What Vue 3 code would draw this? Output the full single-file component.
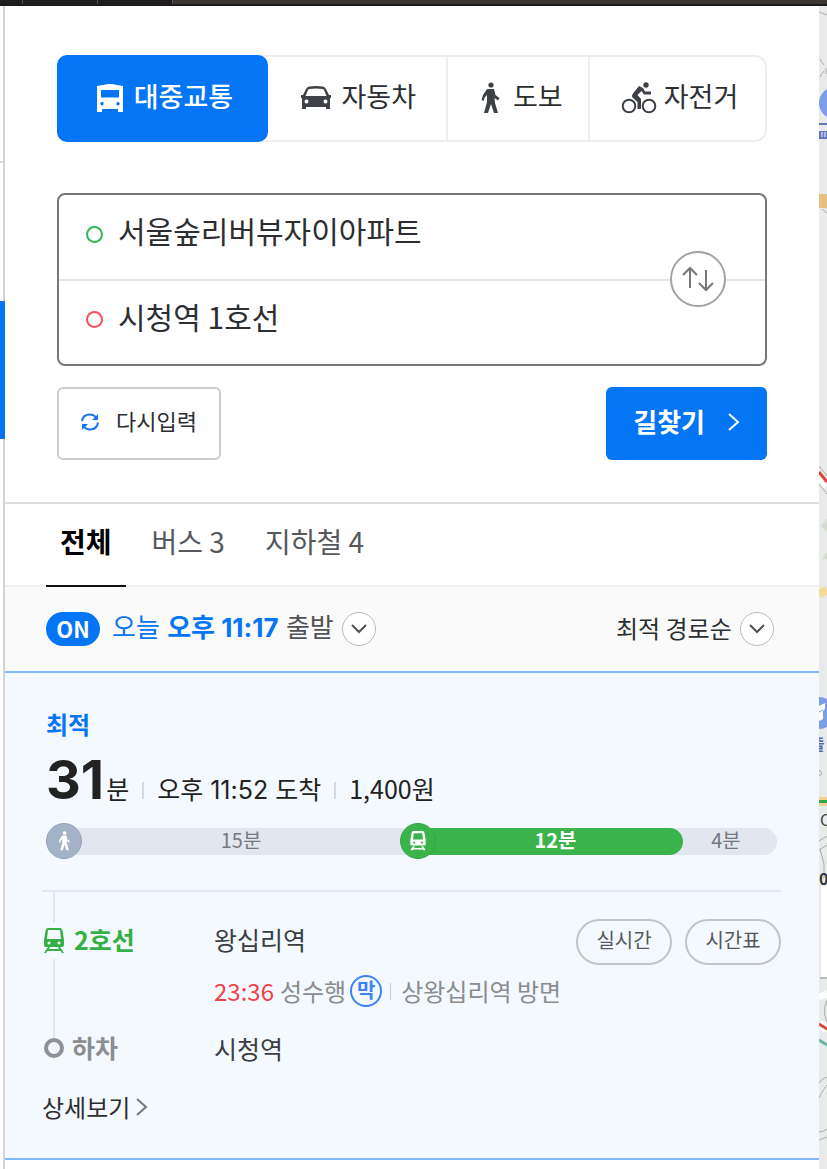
<script setup>
import { ref } from 'vue'

const modes = [
  { id: 'transit', label: '대중교통', grow: 214 },
  { id: 'car', label: '자동차', grow: 180 },
  { id: 'walk', label: '도보', grow: 141 },
  { id: 'bike', label: '자전거', grow: 177 },
]
const mode = ref('transit')

const start = ref('서울숲리버뷰자이아파트')
const goal = ref('시청역 1호선')

function swap() {
  const previous = start.value
  start.value = goal.value
  goal.value = previous
}
function reset() {
  start.value = ''
  goal.value = ''
}

const filters = ['전체', '버스 3', '지하철 4']
const filter = ref('전체')

const segments = [
  { kind: 'walk', icon: true, label: '15분', grow: 354 },
  { kind: 'subway', icon: true, label: '12분', grow: 283 },
  { kind: 'walk', icon: false, label: '4분', grow: 94 },
]
</script>

<template>
  <div class="page">
    <div class="browser-bar"><i></i><i></i><i></i></div>
    <div class="workspace">
      <div class="rail">
        <div class="rail-head"></div>
        <div class="rail-active"></div>
      </div>

      <main class="panel">
        <section class="search">
          <div class="modes" role="tablist">
            <button
              v-for="m in modes"
              :key="m.id"
              type="button"
              role="tab"
              class="mode"
              :class="{ active: m.id === mode }"
              :aria-selected="m.id === mode"
              :style="{ flexGrow: m.grow }"
              @click="mode = m.id"
            >
              <svg v-if="m.id === 'transit'" width="28" height="30" viewBox="0 0 28 30" aria-hidden="true">
                <path fill="currentColor" fill-rule="evenodd" d="M7 2Q14 0 21 2L27 3V29H22V26H6V29H1V3ZM5 7V14.500H23V7ZM6 19a1.700 1.700 0 1 0 .01 0ZM22 19a1.700 1.700 0 1 0 .01 0Z" />
              </svg>
              <svg v-else-if="m.id === 'car'" width="30" height="26" viewBox="0 0 30 26" aria-hidden="true">
                <path fill="currentColor" fill-rule="evenodd" d="M8 1.500Q15 .500 22 1.500Q24 2 25 4L28 10H30V13H29V24H25V22H5V24H1V13H0V10H2L5 4Q6 2 8 1.500ZM8.500 4Q7.500 4.200 7 5L4.500 11H25.500L23 5Q22.500 4.200 21.500 4Q15 3.200 8.500 4ZM5.500 14.500a2 2 0 1 0 .01 0ZM24.500 14.500a2 2 0 1 0 .01 0Z" />
              </svg>
              <svg v-else-if="m.id === 'walk'" width="26" height="32" viewBox="0 0 26 32" aria-hidden="true">
                <circle cx="14" cy="3" r="2.600" fill="currentColor" />
                <path fill="currentColor" d="M10 7H17L18.500 13L22.500 16L21 18.500L17.500 16L18 21L21 31H17L14 22L11 31H7L10 20V13L8 15L6.500 19L4.500 18L6 13Z" />
              </svg>
              <svg v-else width="36" height="32" viewBox="0 0 36 32" aria-hidden="true">
                <g fill="none" stroke="currentColor" stroke-width="2">
                  <circle cx="8" cy="24" r="6.300" />
                  <circle cx="28" cy="24" r="6.300" />
                </g>
                <circle cx="25" cy="3" r="2.700" fill="currentColor" />
                <path fill="currentColor" d="M18 4L22 6L24 9.500H30V12.500H23L20.500 9L16.500 13L20 17V27H16.500V20L12 16Q10 14 12 11.500Z" />
              </svg>
              <span>{{ m.label }}</span>
            </button>
          </div>

          <div class="fields">
            <label class="field">
              <span class="dot start"></span>
              <input v-model="start" type="text" aria-label="출발지" />
            </label>
            <label class="field">
              <span class="dot goal"></span>
              <input v-model="goal" type="text" aria-label="도착지" />
            </label>
            <button type="button" class="swap" aria-label="출발지와 도착지 바꾸기" @click="swap">
              <svg width="34" height="26" viewBox="0 0 34 26" aria-hidden="true">
                <path fill="none" stroke="currentColor" stroke-width="2" d="M9 22V2M2 9L9 2L16 9M25 4V24M18 17L25 24L32 17" />
              </svg>
            </button>
          </div>

          <div class="actions">
            <button type="button" class="reset" @click="reset">
              <svg width="18" height="18" viewBox="0 0 18 18" aria-hidden="true">
                <path fill="none" stroke="currentColor" stroke-width="2" d="M1 8Q2 1.500 9 1.500Q13 1.500 15.500 5M17 9.500Q16 16.500 9 16.500Q5 16.500 2.500 13" />
                <path fill="currentColor" d="M17 1V7H11ZM1 17V11H7Z" />
              </svg>
              <span>다시입력</span>
            </button>
            <button type="button" class="go">
              <span>길찾기</span>
              <svg width="12" height="20" viewBox="0 0 12 20" aria-hidden="true">
                <path fill="none" stroke="currentColor" stroke-width="2" d="M1 2L10 10L1 18" />
              </svg>
            </button>
          </div>
        </section>

        <nav class="filters">
          <button
            v-for="f in filters"
            :key="f"
            type="button"
            class="filter"
            :class="{ active: f === filter }"
            @click="filter = f"
          >{{ f }}</button>
        </nav>

        <div class="options">
          <button type="button" class="depart">
            <span class="on">ON</span>
            <span class="when">오늘 <b>오후 11:17</b> <em>출발</em></span>
            <span class="round">
              <svg width="18" height="12" viewBox="0 0 18 12" aria-hidden="true">
                <path fill="none" stroke="currentColor" stroke-width="2" d="M2 2L9 9L16 2" />
              </svg>
            </span>
          </button>
          <label class="sort">
            <select aria-label="정렬">
              <option>최적 경로순</option>
            </select>
            <span class="round">
              <svg width="18" height="12" viewBox="0 0 18 12" aria-hidden="true">
                <path fill="none" stroke="currentColor" stroke-width="2" d="M2 2L9 9L16 2" />
              </svg>
            </span>
          </label>
        </div>

        <article class="route">
          <div class="overview">
            <strong class="best">최적</strong>
            <div class="summary">
              <span class="minutes">31</span><span class="unit">분</span>
              <i class="bar-sep"></i>
              <span class="arrival">오후 11:52 도착</span>
              <i class="bar-sep"></i>
              <span>1,400원</span>
            </div>
            <div class="timeline">
              <div
                v-for="(s, i) in segments"
                :key="i"
                class="segment"
                :class="s.kind"
                :style="{ flexGrow: s.grow }"
              >
                <span v-if="s.icon" class="badge">
                  <svg v-if="s.kind === 'walk'" width="16" height="20" viewBox="0 0 26 32" aria-hidden="true">
                    <circle cx="14" cy="3" r="3" fill="currentColor" />
                    <path fill="currentColor" d="M10 7H17L18.500 13L22.500 16L21 18.500L17.500 16L18 21L21 31H17L14 22L11 31H7L10 20V13L8 15L6.500 19L4.500 18L6 13Z" />
                  </svg>
                  <svg v-else width="16" height="20" viewBox="0 0 20 26" aria-hidden="true">
                    <path fill="currentColor" fill-rule="evenodd" d="M4 0H16Q18 0 18.500 3L20 12V17Q20 19 18 19H2Q0 19 0 17V12L1.500 3Q2 0 4 0ZM4.500 3L3.500 11H16.500L15.500 3ZM5 13.500a1.500 1.500 0 1 0 .01 0ZM15 13.500a1.500 1.500 0 1 0 .01 0ZM3 20H6L5 22H15L14 20H17L20 25H17L16 24H4L3 25H0Z" />
                  </svg>
                </span>
                <span class="track">{{ s.label }}</span>
              </div>
            </div>
          </div>

          <div class="legs">
            <div class="leg board">
              <div class="leg-name subway-name">
                <span class="marker">
                  <svg width="20" height="26" viewBox="0 0 20 26" aria-hidden="true">
                    <path fill="currentColor" fill-rule="evenodd" d="M4 0H16Q18 0 18.500 3L20 12V17Q20 19 18 19H2Q0 19 0 17V12L1.500 3Q2 0 4 0ZM4 2L3 11H17L16 2ZM5 13.500a1.500 1.500 0 1 0 .01 0ZM15 13.500a1.500 1.500 0 1 0 .01 0ZM4 19H6L5 21H15L14 19H16L20 25H18L16.500 23H3.500L2 25H0Z" />
                  </svg>
                </span>
                <b>2호선</b>
              </div>
              <span class="station">왕십리역</span>
              <div class="pills">
                <button type="button">실시간</button>
                <button type="button">시간표</button>
              </div>
            </div>
            <div class="train">
              <span class="time">23:36</span>
              <span>성수행</span>
              <span class="last">막</span>
              <i class="thin-sep"></i>
              <span>상왕십리역 방면</span>
            </div>
            <div class="leg alight">
              <div class="leg-name alight-name">
                <span class="marker"><i class="ring"></i></span>
                <b>하차</b>
              </div>
              <span class="station">시청역</span>
            </div>
          </div>

          <a class="detail" href="#">
            <span>상세보기</span>
            <svg width="12" height="20" viewBox="0 0 12 20" aria-hidden="true">
              <path fill="none" stroke="currentColor" stroke-width="2" d="M1 2L10 10L1 18" />
            </svg>
          </a>
        </article>
      </main>

      <aside class="map" aria-label="지도">
        <svg width="8" height="1163" viewBox="0 0 8 1163" aria-hidden="true">
          <rect width="8" height="1163" fill="#e9ebeb" />
          <path d="M0 6L8 9" stroke="#aaa" fill="none" />
          <path d="M1 53L5 59M1 71L5 65M7 62V68" stroke="#aaa" fill="none" />
          <circle cx="16" cy="97" r="16" fill="#7d9ee6" />
          <rect y="117" width="8" height="2" fill="#6277b5" />
          <rect y="125" width="8" height="8" fill="#6277b5" />
          <path d="M3 126V131M6 126V131" stroke="#fff" />
          <rect y="188" width="8" height="14" fill="#e7c17f" />
          <path d="M3 203L8 207" stroke="#aaa" />
          <path d="M0 470L8 480" stroke="#fff" stroke-width="8" />
          <path d="M0 460L8 470M0 478L8 488" stroke="#aaa" />
          <path d="M0 466L8 476" stroke="#e0473c" stroke-width="3" />
          <path d="M8 512L2 520L8 526ZM8 546L3 553H8Z" fill="#d5dccb" />
          <path d="M0 588Q4 586 8 584" stroke="#f1dd98" stroke-width="9" fill="none" />
          <circle cx="0" cy="707" r="16" fill="#7d9ee6" />
          <path d="M0 700L6 697V703L4 705V713L0 715Z" fill="#fff" />
          <path d="M0 706L4 704" stroke="#7d9ee6" />
          <text x="-9" y="744" font-size="16" font-weight="700" fill="#5069b2">출</text>
          <circle cx="0" cy="767" r="2.500" stroke="#aaa" fill="none" />
          <rect y="791" width="8" height="9" fill="#f3d18f" />
          <rect y="794" width="8" height="3" fill="#36a64a" />
          <text x="1" y="820" font-size="16" fill="#444">C</text>
          <path d="M0 835L8 830M1 843L5 858V872M0 844L8 839" stroke="#aaa" fill="none" />
          <text x="0" y="879" font-size="16" font-weight="700" fill="#333">0</text>
          <rect x="2" y="880" width="6" height="91" fill="#fff" />
          <rect x="1" y="971" width="7" height="2" fill="#bbb" />
          <path d="M0 991L8 988" stroke="#fff" stroke-width="7" />
          <path d="M8 994Q3 1006 8 1016" stroke="#aaa" fill="none" />
          <path d="M0 1018L8 1023" stroke="#fff" stroke-width="9" />
          <path d="M0 1018L8 1023" stroke="#d84b39" stroke-width="3" />
          <path d="M0 1034L8 1039" stroke="#68b8a5" stroke-width="3" />
          <path d="M0 1077Q2 1073 8 1071M0 1092Q5 1082 8 1079M0 1126Q4 1126 8 1123M0 1134L8 1131" stroke="#aaa" fill="none" />
        </svg>
      </aside>
    </div>
  </div>
</template>

<style>
body {
  background: #fff;
}
</style>

<style scoped>
.page {
  font-family: "Noto Sans CJK KR", "Noto Sans", sans-serif;
  color: #2c2e31;
  min-height: 100vh;
  display: flex;
  flex-direction: column;
  overflow: hidden;
}
.page *,
.page *::before {
  box-sizing: border-box;
}
button,
input,
select {
  font: inherit;
  color: inherit;
  background: none;
  border: 0;
  margin: 0;
  padding: 0;
}
button,
select {
  cursor: pointer;
}
svg {
  display: block;
  flex: none;
}

.browser-bar {
  display: flex;
  height: 6px;
  background: #3b3534;
  border-bottom: 2px solid #1b191a;
}
.browser-bar i {
  width: 75px;
  background: #201d1f;
  border-right: 1px solid #555;
}
.browser-bar i:first-child {
  width: 23px;
}

.workspace {
  flex: 1;
  display: flex;
}
.rail {
  width: 5px;
  background: linear-gradient(#d3d3d3, #d3d3d3) right / 2px 100% no-repeat;
}
.rail-head {
  width: 3px;
  height: 157px;
  border-bottom: 2px solid #dedede;
}
.rail-active {
  height: 138px;
  margin-top: 138px;
  background: #0475f4;
}
.panel {
  flex: 1;
  min-width: 0;
}
.map {
  position: relative;
  width: 8px;
  overflow: hidden;
  background: #e9ebeb;
}
.map svg {
  position: absolute;
  top: 0;
  left: 0;
}

.search {
  padding: 49px 52px 42px;
  border-bottom: 2px solid #dcdcdc;
}
.modes {
  display: flex;
  height: 87px;
  border: 2px solid #eee;
  border-radius: 12px;
}
.mode {
  flex: 1 1 0;
  display: flex;
  align-items: center;
  justify-content: center;
  gap: 10px;
  padding: 0 0 2px 4px;
  font-size: 27px;
  line-height: 32px;
}
.mode span {
  padding-bottom: 4px;
}
.mode svg {
  color: #3e4145;
}
.mode + .mode + .mode {
  border-left: 2px solid #eee;
}
.mode.active {
  margin: -2px 0 -2px -2px;
  border-radius: 10px;
  background: #0475f4;
  color: #fff;
  font-weight: 500;
}
.mode.active svg {
  color: #fff;
}
.mode:last-child {
  gap: 7px;
}

.fields {
  position: relative;
  margin-top: 51px;
  border: 2px solid #777;
  border-radius: 8px;
}
.field {
  display: flex;
  align-items: center;
  gap: 15px;
  height: 84px;
  padding: 0 100px 6px 27px;
}
.field + .field {
  height: 85px;
  border-top: 2px solid #e6e6e6;
}
.field input {
  flex: 1;
  min-width: 0;
  height: 48px;
  padding-bottom: 8px;
  font-size: 30px;
  outline: 0;
}
.dot {
  width: 17px;
  height: 17px;
  border: 2px solid #2db955;
  border-radius: 50%;
}
.dot.goal {
  border-color: #f0505a;
}
.swap {
  position: absolute;
  top: 56px;
  right: 39px;
  width: 56px;
  height: 56px;
  display: flex;
  align-items: center;
  justify-content: center;
  background: #fff;
  border: 2px solid #a3a3a3;
  border-radius: 50%;
  color: #777;
}

.actions {
  display: flex;
  justify-content: space-between;
  margin-top: 21px;
}
.reset,
.go {
  display: flex;
  align-items: center;
  height: 73px;
  border-radius: 6px;
}
.reset {
  gap: 17px;
  padding: 0 22px 4px;
  border: 2px solid #ccc;
  font-size: 22px;
}
.reset span {
  padding-bottom: 3px;
}
.reset svg {
  color: #1a75f5;
}
.go {
  gap: 23px;
  padding: 0 27px 4px;
  background: #0475f4;
  color: #fff;
  font-size: 26px;
  font-weight: 700;
}
.go span {
  padding-bottom: 2px;
}

.filters {
  display: flex;
  gap: 12px;
  padding: 0 41px;
  border-bottom: 2px solid #f0f0f0;
}
.filter {
  height: 83px;
  margin-bottom: -2px;
  padding: 0 14px 8px;
  border-bottom: 2px solid transparent;
  font-size: 28px;
  line-height: 36px;
  color: #56585b;
}
.filter.active {
  border-color: #111;
  color: #000;
  font-weight: 700;
}

.options {
  display: flex;
  align-items: center;
  justify-content: space-between;
  height: 84px;
  padding: 0 45px 0 41px;
  background: #fafafa;
}
.depart,
.sort {
  display: flex;
  align-items: center;
}
.depart {
  gap: 8px;
  font-size: 26px;
  line-height: 32px;
  color: #0475f4;
}
.when,
.arrival {
  font-family: Inter, "Noto Sans CJK KR", sans-serif;
}
.when {
  padding-bottom: 2px;
  margin-left: 4px;
}
.when em {
  font-style: normal;
  color: #505255;
}
.on {
  width: 54px;
  height: 34px;
  border-radius: 17px;
  background: #0475f4;
  color: #fff;
  font-size: 22px;
  line-height: 32px;
  font-weight: 700;
}
.round {
  width: 34px;
  height: 34px;
  display: flex;
  align-items: center;
  justify-content: center;
  background: #fff;
  border: 1px solid #bbb;
  border-radius: 50%;
  color: #505255;
}
.sort {
  gap: 8px;
  font-size: 24px;
}
.sort select {
  appearance: none;
  height: 38px;
  padding-bottom: 4px;
}

.route {
  background: #f4f8ff;
  border-top: 2px solid #82b9fa;
  border-bottom: 2px solid #82b9fa;
  padding: 35px 38px 35px 37px;
}
.overview {
  padding: 0 4px 31px;
  border-bottom: 2px solid #e2e7f1;
}
.best {
  display: block;
  font-size: 24px;
  line-height: 32px;
  color: #0475f4;
}
.summary {
  display: flex;
  align-items: baseline;
  height: 56px;
  margin-top: 12px;
  font-size: 25px;
  line-height: 32px;
  color: #222;
}
.minutes {
  font-family: Inter, "Noto Sans CJK KR", sans-serif;
  font-size: 54px;
  line-height: 56px;
  font-weight: 700;
}
.unit {
  margin-left: 2px;
}
.bar-sep {
  width: 2px;
  height: 17px;
  margin: 0 13px;
  background: #d5d9e0;
}

.timeline {
  position: relative;
  display: flex;
  margin-top: 15px;
}
.timeline::before {
  content: "";
  position: absolute;
  inset: 5px 0 4px 18px;
  border-radius: 14px;
  background: #e1e6ef;
}
.segment {
  position: relative;
  flex: 1 1 0;
  display: flex;
  align-items: center;
  height: 36px;
  padding-top: 1px;
}
.badge {
  position: relative;
  z-index: 1;
  width: 36px;
  height: 36px;
  margin-top: -1px;
  display: flex;
  align-items: center;
  justify-content: center;
  border-radius: 50%;
  border: 1px solid #93a2b8;
  background: #a3b2c7;
  color: #fff;
}
.track {
  flex: 1;
  height: 27px;
  padding-right: 8px;
  text-align: center;
  font-size: 20px;
  line-height: 24px;
  color: #76797e;
}
.walk:first-child .track {
  padding-right: 0;
}
.subway .badge {
  background: #3ab34a;
  border-color: #33a843;
}
.subway .track {
  margin-left: -18px;
  padding-left: 18px;
  border-radius: 0 14px 14px 0;
  background: #3ab34a;
  color: #fff;
  font-weight: 700;
}

.legs {
  padding-top: 27px;
  position: relative;
}
.legs::before {
  content: "";
  position: absolute;
  top: 0;
  bottom: 26px;
  left: 11px;
  width: 2px;
  background: #e2e7f1;
}
.leg {
  display: flex;
  align-items: center;
  font-size: 25px;
  line-height: 32px;
  color: #3c3e41;
}
.leg-name {
  position: relative;
  display: flex;
  align-items: center;
  width: 172px;
}
.marker {
  width: 24px;
  padding: 5px 0 5px 2px;
  background: #f4f8ff;
}
.subway-name {
  gap: 8px;
  color: #35b045;
}
.subway-name .marker {
  margin-bottom: 2px;
}
.alight-name {
  gap: 6px;
  color: #8c8e90;
}
.alight .marker {
  padding: 0 0 0 2px;
}
.leg b {
  padding-bottom: 2px;
}
.board .station,
.board .leg-name b {
  padding-bottom: 6px;
}
.ring {
  display: block;
  width: 20px;
  height: 20px;
  border: 4px solid #8f9193;
  border-radius: 50%;
}
.pills {
  display: flex;
  gap: 13px;
  margin-left: auto;
}
.pills button {
  width: 96px;
  height: 46px;
  padding-bottom: 4px;
  border: 2px solid #c2c4c6;
  border-radius: 23px;
  font-size: 20px;
  line-height: 24px;
  color: #56585b;
}
.train {
  display: flex;
  align-items: center;
  margin: 10px 0 24px 172px;
  font-size: 24px;
  line-height: 32px;
  color: #8a8c90;
}
.time {
  margin-right: 6px;
  color: #ef4149;
}
.last {
  width: 32px;
  height: 32px;
  margin-left: 4px;
  border: 2px solid #3b82f6;
  border-radius: 50%;
  text-align: center;
  font-size: 20px;
  line-height: 26px;
  font-weight: 700;
  color: #3b82f6;
}
.thin-sep {
  width: 1px;
  height: 17px;
  margin: 0 10px 0 8px;
  background: #c8cbd0;
}
.detail {
  display: flex;
  width: fit-content;
  align-items: center;
  gap: 6px;
  margin-top: 26px;
  font-size: 24px;
  line-height: 32px;
  color: #2c2e31;
  text-decoration: none;
}
.detail svg {
  color: #777;
}
</style>
